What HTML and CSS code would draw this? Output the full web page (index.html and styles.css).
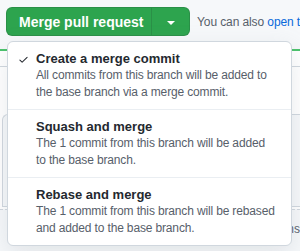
FILE: index.html
```html
<!DOCTYPE html>
<html lang="en">
<head>
  <meta charset="UTF-8">
  <title>Merge pull request</title>
  <link rel="stylesheet" href="styles.css">
</head>
<body>
<div class="page">

  <div class="merge-row">
    <div class="btn-group">
      <button class="btn-merge">Merge pull request</button>
      <button class="btn-caret"><span class="caret"></span></button>
    </div>
    <div class="hint">You can also <a href="#">open this in GitHub Desktop</a></div>
  </div>

  <div class="merge-box">
    <div class="box-top"></div>
    <div class="box-head"></div>
    <div class="box-body">
      <div class="box-inner"></div>
      <div class="box-foot">view command line instructions</div>
    </div>
  </div>

  <div class="merge-menu">
    <div class="menu-item selected">
      <svg class="check" viewBox="0 0 16 16" width="11" height="11"><path d="M13.78 4.22a.75.75 0 0 1 0 1.06l-7.25 7.25a.75.75 0 0 1-1.06 0L2.22 9.28a.75.75 0 0 1 1.06-1.06L6 10.94l6.72-6.72a.75.75 0 0 1 1.06 0Z"/></svg>
      <div class="item-title">Create a merge commit</div>
      <div class="item-desc">All commits from this branch will be added to<br>the base branch via a merge commit.</div>
    </div>
    <div class="menu-item">
      <div class="item-title">Squash and merge</div>
      <div class="item-desc">The 1 commit from this branch will be added<br>to the base branch.</div>
    </div>
    <div class="menu-item">
      <div class="item-title">Rebase and merge</div>
      <div class="item-desc">The 1 commit from this branch will be rebased<br>and added to the base branch.</div>
    </div>
  </div>

</div>
</body>
</html>
```

FILE: styles.css
```css
:root{
  --green:#2da44e;
  --text:#24292f;
  --muted:#57606a;
  --border:#d0d7de;
  --link:#0969da;
}

*{ box-sizing:border-box; }
html,body{
  margin:0; padding:0;
  width:100%; height:100%;
  overflow:hidden;
  background:#f6f8fa;
  font-family:'Liberation Sans', Arial, sans-serif;
  color:var(--text);
}

.page{
  position:relative;
  height:251px;
  padding-top:7px;
  overflow:hidden;
}

/* ================= BUTTON ROW ================= */
.merge-row{
  display:flex; align-items:center; gap:7px;
  padding-left:6px;
  white-space:nowrap;
}
.btn-group{ display:flex; flex:none; }
.btn-merge, .btn-caret{
  height:29px;
  border:1px solid rgba(27,31,36,.15);
  background:var(--green);
  color:#fff;
  font-family:inherit;
  font-size:14px;
  font-weight:700;
  cursor:pointer;
}
.btn-merge{
  width:146px;
  border-radius:6px 0 0 6px;
  padding:0 12px;
}
.btn-caret{
  width:39px;
  margin-left:-1px;
  border-radius:0 6px 6px 0;
  display:flex; align-items:center; justify-content:center;
}
.caret{
  width:0; height:0;
  border-left:4px solid transparent;
  border-right:4px solid transparent;
  border-top:4px solid #fff;
  margin-top:2px;
}
.hint{
  font-size:12px;
  color:var(--muted);
  letter-spacing:-.1px;
}
.hint a{ color:var(--link); text-decoration:none; }

/* ================= BOX BEHIND ================= */
.merge-box{ margin-top:13px; }
.box-top{
  height:2px;
  background:#4ac26b;
}
.box-head{
  height:16px;
  background:#fff;
  border-bottom:1px solid var(--border);
}
.box-body{
  padding-top:47px;
  background:#fff;
}
.box-inner{
  margin-left:2px;
  height:93px;
  border:1px solid var(--border);
  border-right:none;
  border-radius:6px 0 0 0;
  background:#f6f8fa;
}
.box-foot{
  border-top:1px dashed var(--border);
  margin-top:2px;
  padding:12px 0 10px 0;
  background:#f6f8fa;
  font-size:12px;
  color:var(--muted);
  text-align:right;
  white-space:nowrap;
}

/* ================= MENU ================= */
.merge-menu{
  position:absolute;
  top:41px; left:7px;
  width:285px;
  background:#fff;
  border:1px solid var(--border);
  border-radius:6px;
  box-shadow:0 8px 24px rgba(140,149,159,.2);
  overflow:hidden;
}
.menu-item{
  position:relative;
  padding:8px 8px 8px 28px;
  border-bottom:1px solid #eaeef2;
  height:68px;
}
.menu-item:last-child{ border-bottom:none; height:67px; }
.check{
  position:absolute;
  left:10px; top:12px;
  fill:var(--text);
}
.item-title{
  font-size:13px;
  font-weight:700;
  line-height:17px;
}
.item-desc{
  font-size:12px;
  line-height:17px;
  color:var(--muted);
  letter-spacing:-.15px;
  white-space:nowrap;
}
```
